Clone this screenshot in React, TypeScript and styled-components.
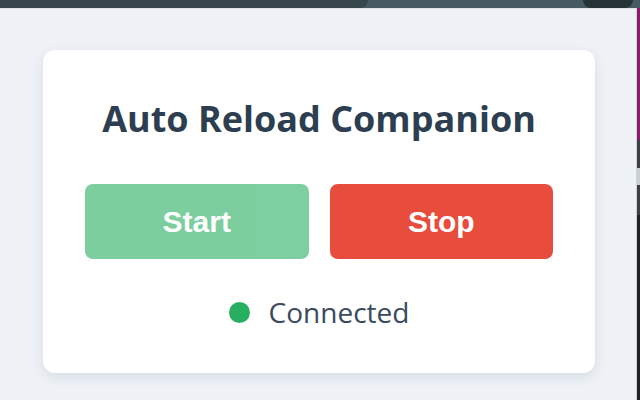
import React from "react";
import styled, { createGlobalStyle } from "styled-components";

const GlobalStyles = createGlobalStyle`
  html, body {
    margin: 0;
    padding: 0;
    width: 640px;
    height: 400px;
    overflow: hidden;
    background: #eef2f7;
  }
  * { box-sizing: border-box; }
`;

const Frame = styled.div`
  display: flex;
  flex-direction: column;
  width: 640px;
  height: 400px;
`;

const ChromeBar = styled.div`
  display: flex;
  height: 8px;
  background: #465a63;
`;

const ActiveTab = styled.div`
  width: 368px;
  background: #37454c;
  border-bottom-right-radius: 8px;
`;

const Pill = styled.div`
  width: 50px;
  margin-left: auto;
  margin-right: 7px;
  background: #263238;
  border-bottom-left-radius: 10px;
  border-bottom-right-radius: 10px;
`;

const Body = styled.div`
  flex: 1;
  display: flex;
`;

const Popup = styled.div`
  flex: 1;
  background: #eef2f7;
  border-top: 1px solid #dde2e8;
  padding: 41px 41px 0 43px;
`;

const EdgeStrip = styled.div`
  width: 4px;
  display: flex;
  flex-direction: column;
  border-left: 1px solid #cfd4da;
`;

const EdgePiece = styled.div<{ $color: string; $h?: number }>`
  background: ${(p) => p.$color};
  height: ${(p) => (p.$h ? `${p.$h}px` : "auto")};
  flex: ${(p) => (p.$h ? "none" : "1")};
`;

const Card = styled.div`
  background: #ffffff;
  border-radius: 12px;
  box-shadow: 0 4px 12px rgba(30, 40, 60, 0.1);
  padding: 47px 42px 0;
  height: 323px;
  display: flex;
  flex-direction: column;
  align-items: center;
`;

const Title = styled.h1`
  margin: 0;
  font-family: "Open Sans", "Noto Sans", sans-serif;
  font-weight: 700;
  font-size: 36px;
  line-height: 44px;
  color: #2c3e50;
  text-align: center;
  white-space: nowrap;
`;

const Buttons = styled.div`
  display: grid;
  grid-template-columns: 1fr 1fr;
  gap: 21px;
  width: 100%;
  margin-top: 43px;
`;

const Button = styled.button<{ $color: string }>`
  height: 75px;
  border: none;
  border-radius: 8px;
  background: ${(p) => p.$color};
  color: #ffffff;
  font-family: "Liberation Sans", Arial, sans-serif;
  font-weight: 700;
  font-size: 30px;
  cursor: pointer;
  &:disabled {
    opacity: 0.6;
    cursor: default;
  }
`;

const Status = styled.div`
  display: flex;
  align-items: center;
  gap: 19px;
  margin-top: 34px;
  font-family: "Open Sans", "Noto Sans", sans-serif;
  font-size: 28px;
  color: #3b4a5e;
`;

const Dot = styled.span`
  width: 21px;
  height: 21px;
  border-radius: 50%;
  background: #27ae60;
`;

export default function App() {
  return (
    <Frame>
      <GlobalStyles />
      <ChromeBar>
        <ActiveTab />
        <Pill />
      </ChromeBar>
      <Body>
        <Popup>
          <Card>
            <Title>Auto Reload Companion</Title>
            <Buttons>
              <Button $color="#27ae60" disabled>
                Start
              </Button>
              <Button $color="#e74c3c">Stop</Button>
            </Buttons>
            <Status>
              <Dot />
              Connected
            </Status>
          </Card>
        </Popup>
        <EdgeStrip>
          <EdgePiece $color="#8a1c6e" $h={132} />
          <EdgePiece $color="#3c3f44" $h={28} />
          <EdgePiece $color="#c9ced3" $h={17} />
          <EdgePiece $color="#3c3f44" $h={30} />
          <EdgePiece $color="#202327" />
        </EdgeStrip>
      </Body>
    </Frame>
  );
}
